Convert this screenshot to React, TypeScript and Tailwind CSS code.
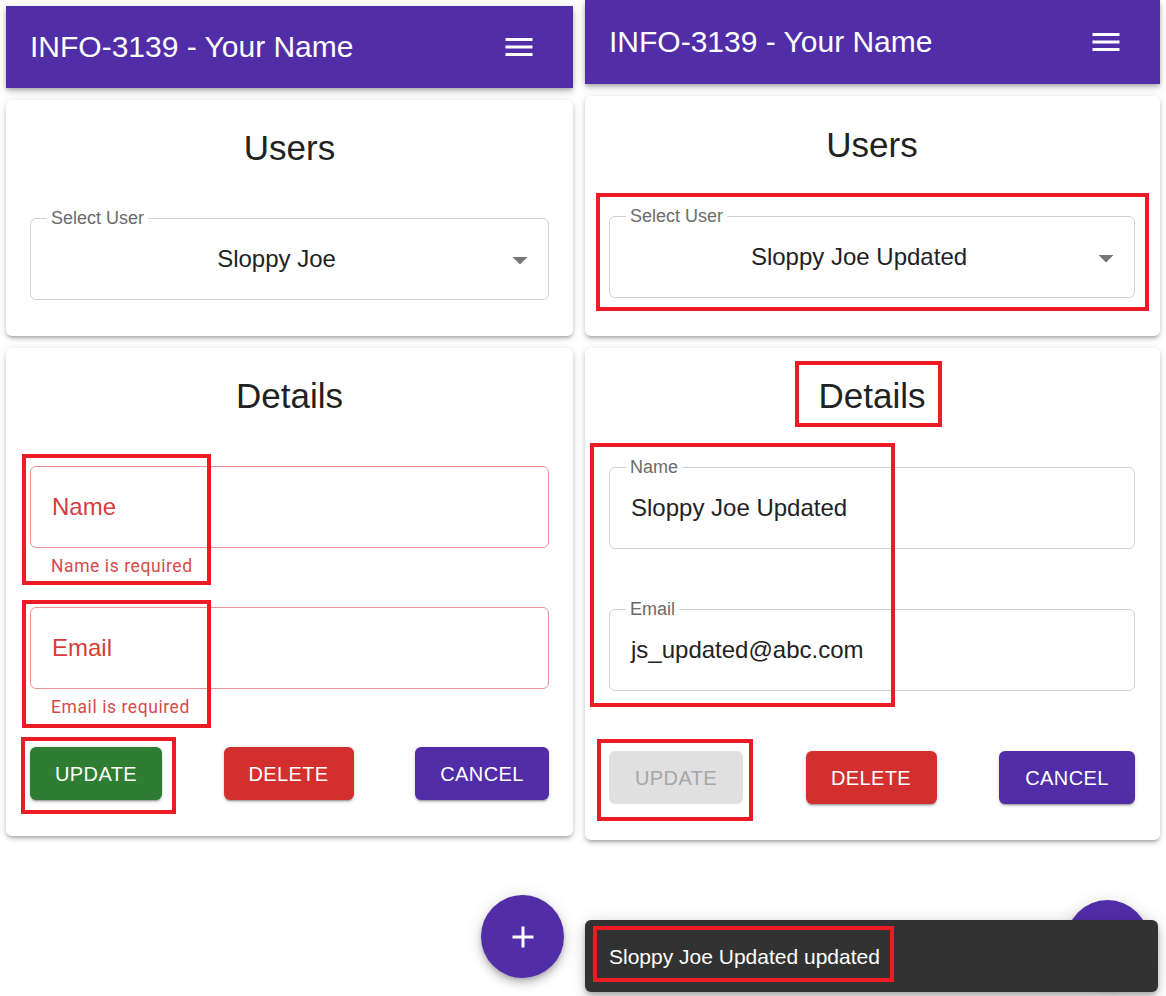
import React from 'react';

const sans = "font-['Liberation_Sans',Arial,sans-serif]";
const roboto = "font-['Roboto','Liberation_Sans',Arial,sans-serif]";

const cardShadow =
  'shadow-[0_3px_3px_-2px_rgba(0,0,0,0.2),0_3px_4px_0_rgba(0,0,0,0.14),0_1px_8px_0_rgba(0,0,0,0.12)]';
const btnShadow =
  'shadow-[0_3px_1px_-2px_rgba(0,0,0,0.2),0_2px_2px_0_rgba(0,0,0,0.14),0_1px_5px_0_rgba(0,0,0,0.12)]';

function MenuIcon() {
  return (
    <svg width="36" height="36" viewBox="0 0 24 24" fill="white">
      <path d="M3 18h18v-2H3zm0-5h18v-2H3zm0-7v2h18V6z" />
    </svg>
  );
}

function AppBar({ className, titleClass }: { className: string; titleClass: string }) {
  return (
    <div
      className={`flex items-center justify-between bg-[#512da8] pl-[24px] pr-[36px] shadow-[0_2px_4px_-1px_rgba(0,0,0,0.2),0_4px_5px_0_rgba(0,0,0,0.14),0_1px_10px_0_rgba(0,0,0,0.12)] ${className}`}
    >
      <span className={`${sans} leading-none text-white ${titleClass}`}>INFO-3139 - Your Name</span>
      <MenuIcon />
    </div>
  );
}

function Card({ className, children }: { className: string; children: React.ReactNode }) {
  return <div className={`rounded-[6px] bg-white ${cardShadow} ${className}`}>{children}</div>;
}

function Heading({ children }: { children: React.ReactNode }) {
  return <h2 className={`${sans} text-center text-[35px] leading-[35px] text-[#212121]`}>{children}</h2>;
}

function SelectField({ className, value }: { className: string; value: string }) {
  return (
    <div className={`relative flex h-[82px] items-center rounded-[6px] border border-[#d0d0d0] pl-[21px] pr-[47px] ${className}`}>
      <span className={`${sans} absolute left-[16px] top-[-10px] bg-white px-[4px] text-[18px] leading-[18px] text-[#6b6b6b]`}>
        Select User
      </span>
      <span className={`${sans} w-full text-center text-[24px] leading-none text-[#222]`}>{value}</span>
      <svg className="absolute right-[10px] top-[23px]" width="36" height="36" viewBox="0 0 24 24" fill="#757575">
        <path d="M7 10l5 5 5-5z" />
      </svg>
    </div>
  );
}

function ValueField({ className, label, value }: { className: string; label: string; value: string }) {
  return (
    <div className={`relative flex h-[82px] items-center rounded-[6px] border border-[#d0d0d0] pl-[21px] ${className}`}>
      <span className={`${sans} absolute left-[16px] top-[-10px] bg-white px-[4px] text-[18px] leading-[18px] text-[#6b6b6b]`}>
        {label}
      </span>
      <span className={`${sans} text-[24px] leading-none text-[#222]`}>{value}</span>
    </div>
  );
}

function ErrorField({ className, label, helper }: { className: string; label: string; helper: string }) {
  return (
    <div className={className}>
      <div className="flex h-[82px] items-center rounded-[6px] border border-[#eb9393] pl-[21px]">
        <span className={`${sans} text-[24px] leading-none text-[#d63c3c]`}>{label}</span>
      </div>
      <p className={`${roboto} mt-[4px] pl-[21px] text-[17.5px] leading-[29px] tracking-[0.033em] text-[#d84a4a]`}>
        {helper}
      </p>
    </div>
  );
}

function Btn({ className, children }: { className: string; children: React.ReactNode }) {
  return (
    <div
      className={`${sans} flex h-[53px] items-center justify-center rounded-[6px] text-[20px] uppercase tracking-[0.02em] ${className}`}
    >
      {children}
    </div>
  );
}

function Fab({ className }: { className: string }) {
  return (
    <div
      className={`flex h-[83px] w-[83px] items-center justify-center rounded-full bg-[#512da8] shadow-[0_3px_5px_-1px_rgba(0,0,0,0.2),0_6px_10px_0_rgba(0,0,0,0.14),0_1px_18px_0_rgba(0,0,0,0.12)] ${className}`}
    >
      <svg width="36" height="36" viewBox="0 0 24 24" fill="white">
        <path d="M19 13h-6v6h-2v-6H5v-2h6V5h2v6h6z" />
      </svg>
    </div>
  );
}

function Mark({ className }: { className: string }) {
  return <div className={`pointer-events-none absolute border-[4px] border-[#ed1c24] ${className}`} />;
}

export default function App() {
  return (
    <div className="flex h-[996px] w-[1166px] items-start overflow-hidden bg-white">
      {/* before: empty form with validation errors */}
      <div className="relative ml-[6px] mt-[6px] flex w-[567px] flex-col">
        <AppBar className="h-[82px]" titleClass="text-[30px]" />
        <Card className="mt-[12px] h-[236px] px-[24px] pt-[30px]">
          <Heading>Users</Heading>
          <SelectField className="mt-[53px]" value="Sloppy Joe" />
        </Card>
        <Card className="mt-[12px] px-[24px] pb-[36px] pt-[30px]">
          <Heading>Details</Heading>
          <ErrorField className="mt-[53px]" label="Name" helper="Name is required" />
          <ErrorField className="mt-[26px]" label="Email" helper="Email is required" />
          <div className="mt-[25px] flex justify-between">
            <Btn className={`w-[132px] bg-[#2e7d32] text-white ${btnShadow}`}>Update</Btn>
            <Btn className={`w-[130px] bg-[#d32f2f] text-white ${btnShadow}`}>Delete</Btn>
            <Btn className={`w-[134px] bg-[#512da8] text-white ${btnShadow}`}>Cancel</Btn>
          </div>
        </Card>
        <Fab className="mr-[9px] mt-[59px] self-end" />

        <Mark className="left-[16px] top-[448px] h-[131px] w-[189px]" />
        <Mark className="left-[16px] top-[594px] h-[128px] w-[189px]" />
        <Mark className="left-[15px] top-[731px] h-[77px] w-[155px]" />
      </div>

      {/* after: user updated */}
      <div className="relative ml-[12px] flex w-[575px] flex-col">
        <AppBar className="h-[84px]" titleClass="text-[30px]" />
        <Card className="mt-[12px] h-[240px] pl-[24px] pr-[25px] pt-[31px]">
          <Heading>Users</Heading>
          <SelectField className="mt-[54px]" value="Sloppy Joe Updated" />
        </Card>
        <Card className="mt-[12px] pb-[36px] pl-[24px] pr-[25px] pt-[30px]">
          <Heading>Details</Heading>
          <ValueField className="mt-[54px]" label="Name" value="Sloppy Joe Updated" />
          <ValueField className="mt-[60px]" label="Email" value="js_updated@abc.com" />
          <div className="mt-[60px] flex justify-between">
            <Btn className="w-[134px] bg-[#e0e0e0] text-[#a6a6a6]">Update</Btn>
            <Btn className={`w-[131px] bg-[#d32f2f] text-white ${btnShadow}`}>Delete</Btn>
            <Btn className={`w-[136px] bg-[#512da8] text-white ${btnShadow}`}>Cancel</Btn>
          </div>
        </Card>
        <Fab className="mr-[11px] mt-[60px] self-end" />

        <div className="absolute left-0 right-[2px] top-[920px] flex h-[72px] items-center rounded-[6px] bg-[#323232] pl-[24px] shadow-[0_3px_5px_-1px_rgba(0,0,0,0.2),0_6px_10px_0_rgba(0,0,0,0.14),0_1px_18px_0_rgba(0,0,0,0.12)]">
          <span className={`${sans} text-[21px] leading-none text-white`}>Sloppy Joe Updated updated</span>
        </div>

        <Mark className="left-[11px] top-[193px] h-[118px] w-[553px]" />
        <Mark className="left-[210px] top-[361px] h-[66px] w-[147px]" />
        <Mark className="left-[5px] top-[443px] h-[264px] w-[305px]" />
        <Mark className="left-[12px] top-[739px] h-[82px] w-[156px]" />
        <Mark className="left-[8px] top-[926px] h-[56px] w-[301px]" />
      </div>
    </div>
  );
}
